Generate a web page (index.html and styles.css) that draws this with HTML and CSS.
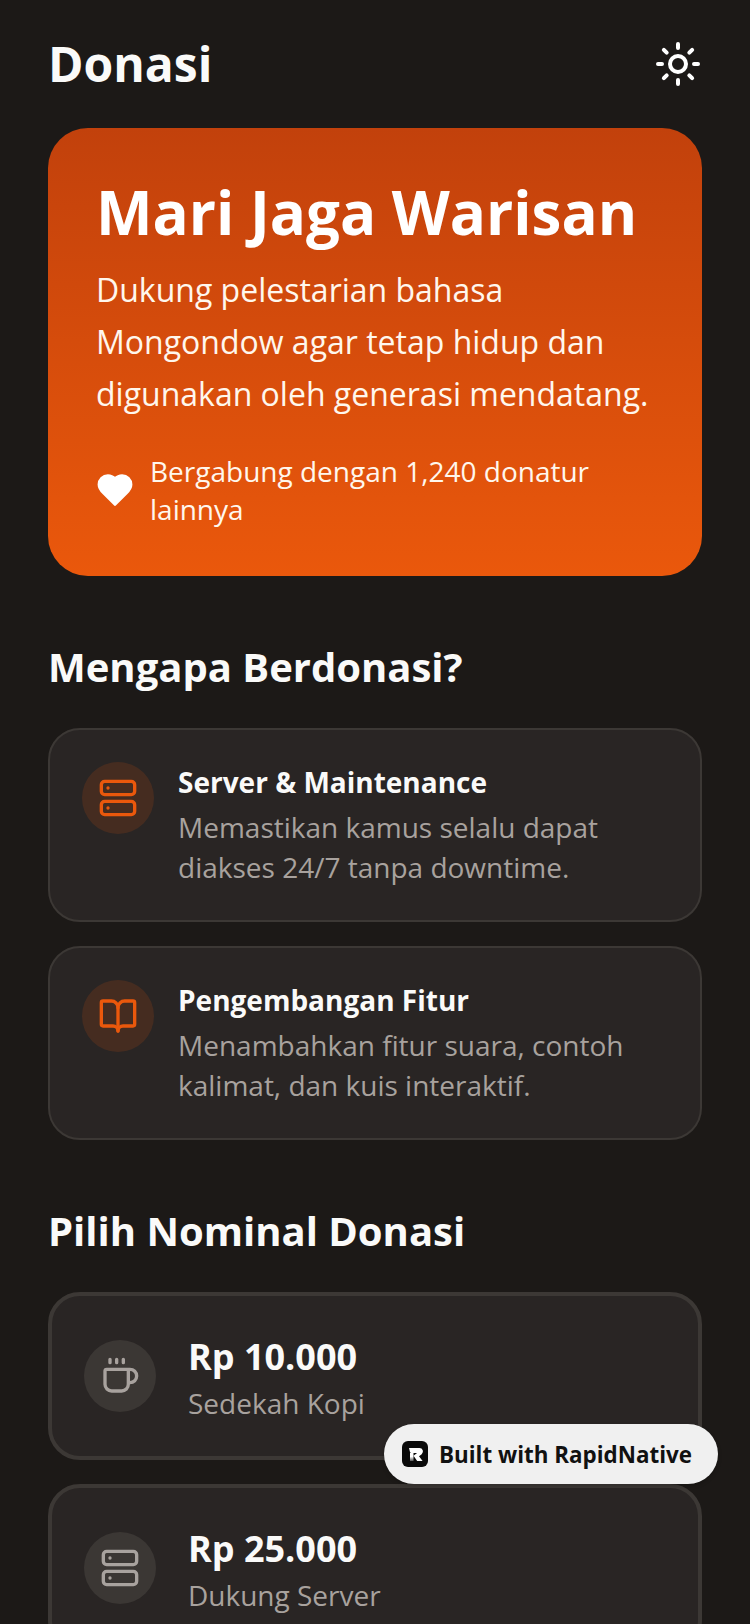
FILE: index.html
```html
<!DOCTYPE html>
<html lang="id">
<head>
<meta charset="utf-8">
<title>Donasi</title>
<link rel="stylesheet" href="styles.css">
</head>
<body>
<div class="screen">
  <header class="header">
    <h1 class="page-title">Donasi</h1>
    <svg class="sun" viewBox="0 0 24 24" fill="none" stroke="#fff" stroke-width="2" stroke-linecap="round" stroke-linejoin="round"><circle cx="12" cy="12" r="4"/><path d="M12 2v2M12 20v2M4.93 4.93l1.41 1.41M17.66 17.66l1.41 1.41M2 12h2M20 12h2M6.34 17.66l-1.41 1.41M19.07 4.93l-1.41 1.41"/></svg>
  </header>
  <section class="hero">
    <h2 class="hero-title">Mari Jaga Warisan</h2>
    <p class="hero-text">Dukung pelestarian bahasa Mongondow agar tetap hidup dan digunakan oleh generasi mendatang.</p>
    <div class="hero-foot">
      <svg class="heart" viewBox="0 0 24 24" fill="#fff" stroke="#fff" stroke-width="2" stroke-linecap="round" stroke-linejoin="round"><path d="M19 14c1.49-1.46 3-3.21 3-5.5A5.5 5.5 0 0 0 16.5 3c-1.76 0-3 .5-4.5 2-1.5-1.5-2.74-2-4.5-2A5.5 5.5 0 0 0 2 8.5c0 2.3 1.5 4.05 3 5.5l7 7Z"/></svg>
      <span class="hero-foot-text">Bergabung dengan 1,240 donatur lainnya</span>
    </div>
  </section>
  <h2 class="section-title why-title">Mengapa Berdonasi?</h2>
  <div class="info-list">
    <article class="info-card">
      <div class="info-icon">
        <svg class="icon" viewBox="0 0 24 24" fill="none" stroke="#ea580c" stroke-width="2" stroke-linecap="round" stroke-linejoin="round"><rect x="2" y="2" width="20" height="8" rx="2"/><rect x="2" y="14" width="20" height="8" rx="2"/><path d="M6 6h.01M6 18h.01"/></svg>
      </div>
      <div class="info-body">
        <h3 class="info-title">Server &amp; Maintenance</h3>
        <p class="info-text">Memastikan kamus selalu dapat diakses 24/7 tanpa downtime.</p>
      </div>
    </article>
    <article class="info-card">
      <div class="info-icon">
        <svg class="icon" viewBox="0 0 24 24" fill="none" stroke="#ea580c" stroke-width="2" stroke-linecap="round" stroke-linejoin="round"><path d="M12 7v14"/><path d="M3 18a1 1 0 0 1-1-1V4a1 1 0 0 1 1-1h5a4 4 0 0 1 4 4 4 4 0 0 1 4-4h5a1 1 0 0 1 1 1v13a1 1 0 0 1-1 1h-6a3 3 0 0 0-3 3 3 3 0 0 0-3-3z"/></svg>
      </div>
      <div class="info-body">
        <h3 class="info-title">Pengembangan Fitur</h3>
        <p class="info-text">Menambahkan fitur suara, contoh kalimat, dan kuis interaktif.</p>
      </div>
    </article>
  </div>
  <h2 class="section-title amount-title">Pilih Nominal Donasi</h2>
  <div class="amount-list">
    <article class="amount-card">
      <div class="amount-icon">
        <svg class="icon" viewBox="0 0 24 24" fill="none" stroke="#a8a29e" stroke-width="2" stroke-linecap="round" stroke-linejoin="round"><path d="M10 2v2M14 2v2M6 2v2"/><path d="M16 8a1 1 0 0 1 1 1v8a4 4 0 0 1-4 4H7a4 4 0 0 1-4-4V9a1 1 0 0 1 1-1h14a4 4 0 1 1 0 8h-1"/></svg>
      </div>
      <div class="amount-body">
        <div class="amount-value">Rp 10.000</div>
        <div class="amount-label">Sedekah Kopi</div>
      </div>
    </article>
    <article class="amount-card">
      <div class="amount-icon">
        <svg class="icon" viewBox="0 0 24 24" fill="none" stroke="#a8a29e" stroke-width="2" stroke-linecap="round" stroke-linejoin="round"><rect x="2" y="2" width="20" height="8" rx="2"/><rect x="2" y="14" width="20" height="8" rx="2"/><path d="M6 6h.01M6 18h.01"/></svg>
      </div>
      <div class="amount-body">
        <div class="amount-value">Rp 25.000</div>
        <div class="amount-label">Dukung Server</div>
      </div>
    </article>
  </div>
</div>
<div class="badge">
  <span class="badge-logo"><svg viewBox="0 0 26 26" class="badge-r"><defs><linearGradient id="rfade" x1="0" y1="0" x2="0" y2="1"><stop offset=".45" stop-color="#fff"/><stop offset="1" stop-color="#555"/></linearGradient></defs><path d="M7 7h10.5a3.5 3.5 0 0 1 2.2 6.2L17 15.2l3.6 4.8h-5.4l-3.7-5.2 3.6-2.8H8.8l-.8-.9z" fill="#fff"/><path d="M8 12h3.5v8H8z" fill="url(#rfade)"/></svg></span>
  <span class="badge-text">Built with RapidNative</span>
</div>
</body>
</html>
```
FILE: styles.css
```css
* { box-sizing: border-box; margin: 0; padding: 0; }
html, body { width: 750px; height: 1624px; overflow: hidden; }
body { background: #1c1917; font-family: "Open Sans", sans-serif; color: #fafaf9; position: relative; }
.screen { padding: 32px 48px 0; }
.header { display: flex; align-items: center; justify-content: space-between; height: 64px; margin-bottom: 32px; }
.page-title { font-size: 48px; line-height: 64px; font-weight: 700; color: #fafaf9; }
.sun { width: 48px; height: 48px; margin-top: -1px; }
.hero { height: 448px; border-radius: 40px; padding: 48px; background: linear-gradient(180deg, #c2410c, #ea580c); color: #fff; }
.hero-title { font-size: 60px; line-height: 72px; font-weight: 700; margin-bottom: 16px; }
.hero-text { font-size: 32px; line-height: 52px; color: #fff7ed; }
.hero-foot { display: flex; align-items: center; gap: 16px; margin-top: 32px; }
.heart { width: 38px; height: 38px; flex: none; }
.hero-foot-text { font-size: 28px; line-height: 38px; color: #fff7ed; }
.section-title { font-size: 40px; line-height: 52px; font-weight: 700; }
.why-title { margin-top: 65px; margin-bottom: 35px; }
.info-list { display: flex; flex-direction: column; gap: 24px; }
.info-card { display: flex; gap: 24px; height: 194px; padding: 32px; background: #292524; border: 2px solid #3c3835; border-radius: 32px; }
.info-icon { width: 72px; height: 72px; flex: none; border-radius: 50%; background: rgba(234, 88, 12, .15); display: flex; align-items: center; justify-content: center; }
.icon { width: 40px; height: 40px; }
.info-title { font-size: 28px; line-height: 40px; font-weight: 700; margin-bottom: 5px; }
.info-text { font-size: 28px; line-height: 40px; color: #a8a29e; }
.amount-title { margin-top: 65px; margin-bottom: 35px; }
.amount-list { display: flex; flex-direction: column; gap: 24px; }
.amount-card { display: flex; align-items: center; gap: 32px; height: 168px; padding: 0 32px; background: #292524; border: 4px solid #3c3835; border-radius: 32px; flex: none; }
.amount-icon { width: 72px; height: 72px; flex: none; border-radius: 50%; background: #3b3734; display: flex; align-items: center; justify-content: center; }
.amount-body { padding-top: 6px; }
.amount-value { font-size: 36px; line-height: 48px; font-weight: 700; }
.amount-label { font-size: 28px; line-height: 44px; color: #a8a29e; }
.badge { position: absolute; left: 384px; top: 1424px; width: 334px; height: 60px; border-radius: 30px; background: #f0f0f0; display: flex; align-items: center; gap: 11px; padding-left: 18px; box-shadow: 0 2px 4px rgba(0,0,0,.2); }
.badge-logo { width: 26px; height: 26px; border-radius: 6px; background: #0a0a0a; display: flex; }
.badge-r { width: 26px; height: 26px; }
.badge-text { font-size: 22.4px; font-weight: 700; color: #111; white-space: nowrap; }
```
